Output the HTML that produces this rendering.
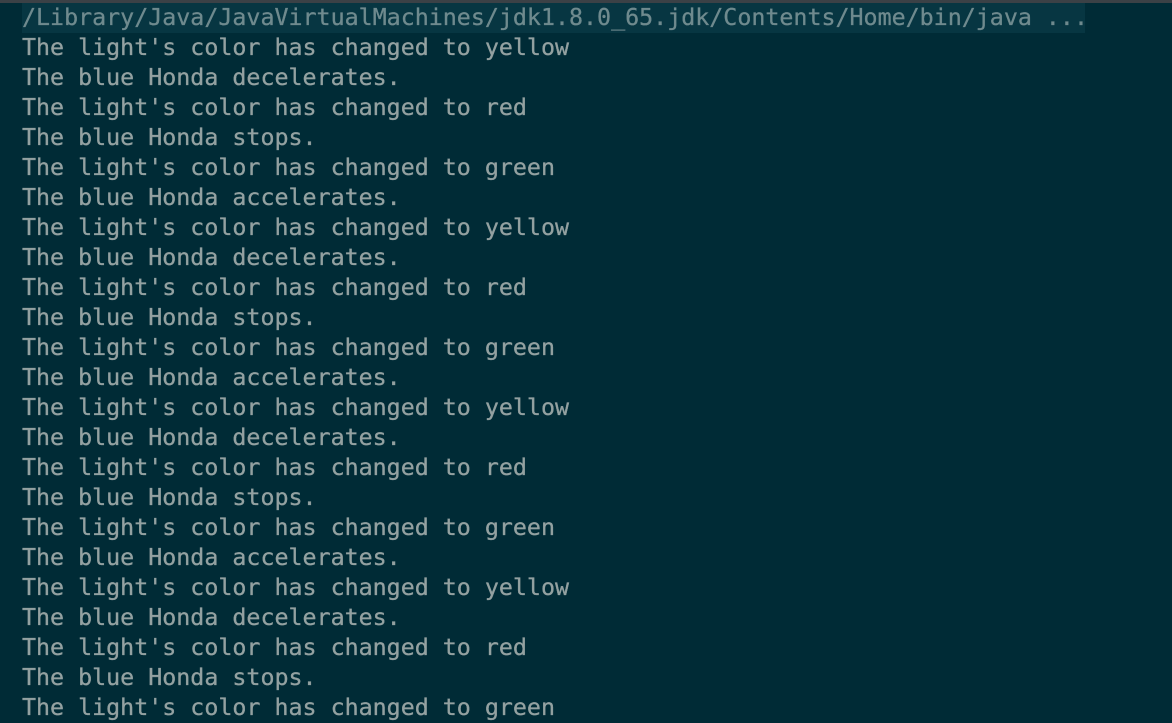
<!DOCTYPE html>
<html><head><style>
html,body{margin:0;padding:0;background:#002b36;width:1172px;height:710px;overflow:hidden}
.bar{position:absolute;top:0;left:0;width:1172px;height:3px;background:#3b4146}
.out{position:absolute;top:3px;left:22px;font-family:"DejaVu Sans Mono","Liberation Mono",monospace;font-size:23.3px;line-height:30px;color:#93a1a1;white-space:pre;-webkit-text-stroke:0.3px currentColor}
.first{background:#073642;color:#6f8a8e;width:1063px}
</style></head><body>
<div class="bar"></div>
<div class="out"><div class="first">/Library/Java/JavaVirtualMachines/jdk1.8.0_65.jdk/Contents/Home/bin/java ...</div><div>The light's color has changed to yellow
The blue Honda decelerates.
The light's color has changed to red
The blue Honda stops.
The light's color has changed to green
The blue Honda accelerates.
The light's color has changed to yellow
The blue Honda decelerates.
The light's color has changed to red
The blue Honda stops.
The light's color has changed to green
The blue Honda accelerates.
The light's color has changed to yellow
The blue Honda decelerates.
The light's color has changed to red
The blue Honda stops.
The light's color has changed to green
The blue Honda accelerates.
The light's color has changed to yellow
The blue Honda decelerates.
The light's color has changed to red
The blue Honda stops.
The light's color has changed to green</div></div>
</body></html>
